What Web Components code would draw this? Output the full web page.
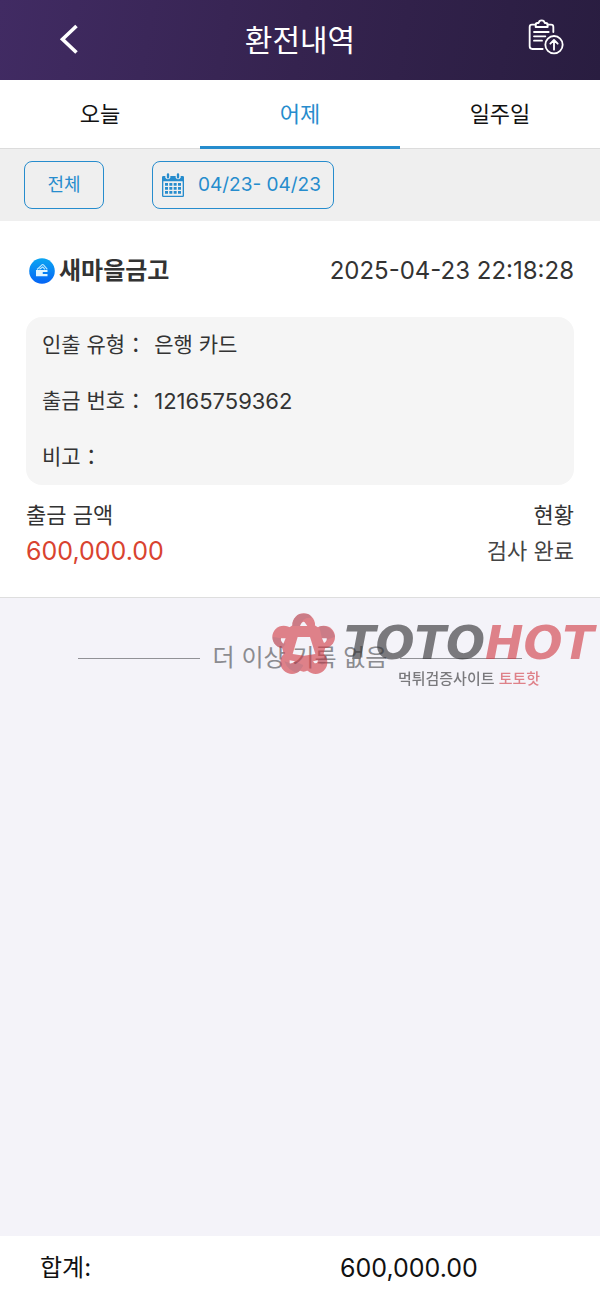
<!DOCTYPE html>
<html lang="ko">
<head>
<meta charset="utf-8">
<meta name="viewport" content="width=device-width, initial-scale=1">
<title>환전내역</title>
<style>
  body { margin: 0; font-family: Inter, "Noto Sans CJK KR", sans-serif; color: #333; --accent: #268ccd; }
</style>
</head>
<body>
<history-page></history-page>
<script>
const define = (name, html) => customElements.define(name, class extends HTMLElement {
  constructor() {
    super();
    const t = document.createElement('template');
    t.innerHTML = html;
    this.attachShadow({ mode: 'open' }).append(t.content.cloneNode(true));
  }
});

define('page-header', `
<style>
  :host { display: grid; grid-template-columns: 1fr auto 1fr; align-items: center; height: 80px; padding: 0 20px;
    background: linear-gradient(100deg, #412b63, #35234f 50%, #291d40); color: #fff; }
  h1 { margin: 0; font-size: 30px; font-weight: 400; line-height: 40px; }
  button { width: 60px; height: 60px; padding: 0; border: 0; background: none; color: inherit; }
  .back { margin-left: 20px; }
  .report { justify-self: end; }
  svg { display: block; width: 60px; height: 60px; fill: none; stroke: currentColor; }
</style>
<button class="back" aria-label="뒤로"><svg viewBox="0 0 60 60" stroke-width="3.6"><path d="M36.5 16 22.5 29.2 36.5 42.5"/></svg></button>
<h1><slot></slot></h1>
<button class="report" aria-label="내역 제출"><svg viewBox="0 0 180 180" stroke-width="5.5" stroke-linecap="round" stroke-linejoin="round">
  <path d="M47 44H36q-7 0-7 7v58q0 8 8 8h31M82 44h11q7 0 7 7v15"/>
  <path d="M47 51v-7q0-5 5-5h4q1-8 9-8t9 8h4q5 0 5 5v7z"/>
  <path d="M42 66h44M42 79h34M42 92h24"/>
  <circle cx="102" cy="104" r="26"/><path d="M102 119V90M91 101l11-11 11 11"/>
</svg></button>`);

define('day-tabs', `
<style>
  :host { display: flex; height: 69px; background: #fff; box-shadow: inset 0 -1px #dcdcdc; }
</style>
<slot></slot>`);

define('day-tab', `
<style>
  :host { display: flex; flex: 1; color: #111; }
  :host([selected]) { color: var(--accent); }
  button { flex: 1; padding: 2px 0 0; border: 0; border-bottom: 3px solid transparent; background: none; color: inherit;
    font: 400 22px/32px Inter, "Noto Sans CJK KR", sans-serif; }
  :host([selected]) button { border-color: var(--accent); }
</style>
<button><slot></slot></button>`);

define('filter-bar', `
<style>
  :host { display: flex; gap: 48px; padding: 12px 24px; background: #efefef; }
</style>
<slot></slot>`);

define('filter-button', `
<style>
  :host { display: block; }
  button { display: flex; align-items: center; justify-content: center; gap: 14px; height: 48px; min-width: 80px; padding: 0 10px;
    border: 1px solid var(--accent); border-radius: 8px; background: none; color: var(--accent);
    font: 400 18px/24px Inter, "Noto Sans CJK KR", sans-serif; }
  :host([dates]) button { padding: 0 12px 0 9px; font-size: 19px; }
  ::slotted(svg) { display: block; width: 22px; height: 24px; }
</style>
<button><slot name="icon"></slot><slot></slot></button>`);

define('withdrawal-record', `
<style>
  :host { display: block; padding: 4px 26px 28px; background: #fff; border-bottom: 1px solid #dedede; }
  header { display: flex; align-items: center; justify-content: space-between; height: 92px; }
  h2 { display: flex; align-items: center; gap: 4px; margin: 0 0 0 3px; font-size: 24px; line-height: 36px; font-weight: 700; }
  svg { display: block; width: 26px; height: 26px; }
  time { font-size: 24px; line-height: 36px; }
  footer { display: flex; justify-content: space-between; margin-top: 12px; }
</style>
<header>
  <h2><svg viewBox="0 0 26 26"><defs><linearGradient id="g" x2="0" y2="1"><stop stop-color="#0ba6f2"/><stop offset="1" stop-color="#0564f5"/></linearGradient></defs>
    <circle cx="13" cy="13" r="12.8" fill="url(#g)"/>
    <path d="M8 11.5 13 6.8q.8-.6 1.5.1l3.8 4.4M10.5 11.3l3.2-2.3 2.2 2.4" fill="none" stroke="#bdeaff" stroke-width="1.1"/>
    <path d="M7 12h11.5v2.1H14q-1 .9 0 1.8h4.5v2.3H7z" fill="#e1f5ff"/></svg><slot name="bank"></slot></h2>
  <time><slot name="time"></slot></time>
</header>
<slot></slot>
<footer><slot name="summary"></slot></footer>`);

define('detail-list', `
<style>
  :host { display: block; padding: 0 16px; border-radius: 16px; background: #f5f5f5; }
</style>
<slot></slot>`);

define('detail-row', `
<style>
  :host { display: flex; align-items: center; gap: 8px; height: 56px; font-size: 21px; line-height: 32px; }
  :host([number]) slot[name=value] { font-size: 22px; }
</style>
<span><slot></slot></span><span><slot name="value"></slot></span>`);

define('summary-item', `
<style>
  :host { display: block; font-size: 22px; line-height: 36px; }
  :host([end]) { text-align: right; }
  .value { color: #444; }
  :host([amount]) .value { color: #d9432f; font-size: 25px; }
</style>
<div><slot></slot></div><div class="value"><slot name="value"></slot></div>`);

define('list-end', `
<style>
  :host { display: flex; align-items: center; gap: 13px; padding: 42px 78px 0; color: #8b8b90; font-size: 24px; line-height: 36px; white-space: nowrap; }
  i { flex: 1; height: 1px; background: #919196; }
</style>
<i></i><span><slot></slot></span><i></i>`);

define('brand-mark', `
<style>
  :host { position: absolute; top: 10px; right: 6px; display: flex; opacity: .62; color: #303032; pointer-events: none; }
  svg { display: block; width: 80px; height: 75px; flex: none; }
  .words { display: flex; flex-direction: column; align-items: center; width: 250px; margin-left: -1px; white-space: nowrap; }
  .logo { margin-top: 10px; font: italic 700 46px/50px "DejaVu Sans", sans-serif; }
  .tag { font: 500 15px/20px "Noto Sans CJK KR", sans-serif; }
  b { font-weight: inherit; color: #d23c46; }
</style>
<svg viewBox="0 0 240 225" aria-hidden="true">
  <defs><mask id="m"><rect width="240" height="225" fill="#fff"/>
    <path d="M98 87H135L151 138 117 143 83 138Z M105 54Q113 37 119 43L127 54Z M48 91H62L55 107Q46 100 48 91Z M171 91H185Q187 99 177 105Z M74 157 90 160Q84 167 74 166Z M144 160 158 157Q160 167 149 166Z"/></mask>
    <clipPath id="c"><circle cx="116" cy="50" r="34"/><circle cx="56" cy="87" r="34"/><circle cx="176" cy="87" r="34"/><circle cx="81" cy="163" r="35"/><circle cx="152" cy="163" r="35"/></clipPath></defs>
  <g mask="url(#m)">
    <g fill="#d23c46"><circle cx="116" cy="50" r="34"/><circle cx="56" cy="87" r="34"/><circle cx="176" cy="87" r="34"/><circle cx="81" cy="163" r="35"/><circle cx="152" cy="163" r="35"/>
      <path stroke="#d23c46" stroke-width="34" stroke-linejoin="round" d="M60 87 116 50 172 87 152 160 116 174 80 160Z"/></g>
    <g fill="#892f40" opacity=".42" clip-path="url(#c)">
      <path d="M80 54Q84 10 132 17L140 30Q114 25 105 54Z"/>
      <path d="M20 86Q19 120 50 125L62 107Q43 98 48 91Z"/>
      <path d="M162 54Q200 50 210 86L185 96 171 91Z"/>
      <path d="M58 160Q69 190 100 195L116 172 90 160 84 167Z"/>
      <path d="M186 140Q192 159 171 172L158 157Z"/>
    </g>
  </g>
</svg>
<div class="words"><span class="logo">TOTO<b>HOT</b></span><span class="tag">먹튀검증사이트 <b>토토핫</b></span></div>`);

define('total-bar', `
<style>
  :host { display: grid; grid-template-columns: 1fr 1fr; align-items: center; height: 64px; background: #fff; color: #111; font-size: 24px; line-height: 36px; }
  span { padding-left: 40px; }
  .value { font-size: 25px; }
</style>
<span><slot></slot></span><span class="value"><slot name="value"></slot></span>`);

define('history-page', `
<style>
  :host { display: flex; flex-direction: column; min-height: 100vh; background: #f4f3f9; }
  main { flex: 1; }
  .end { position: relative; min-height: 100px; }
</style>
<page-header>환전내역</page-header>
<day-tabs><day-tab>오늘</day-tab><day-tab selected>어제</day-tab><day-tab>일주일</day-tab></day-tabs>
<filter-bar>
  <filter-button>전체</filter-button>
  <filter-button dates><svg slot="icon" viewBox="0 0 66 72" aria-hidden="true">
    <path fill="#268ccd" fill-rule="evenodd" d="M4 9H10V14Q18 24 25 14V9H41V14Q48 24 56 14V9H62Q66 9 66 13V68Q66 72 62 72H4Q0 72 0 68V13Q0 9 4 9ZM4 25V68H62V25Z"/>
    <path stroke="#268ccd" stroke-width="7" stroke-linecap="round" d="M18 4v9M48 4v9"/>
    <path stroke="#268ccd" stroke-width="8" stroke-dasharray="9 4" d="M9 34h48M9 46h48M9 58h48"/>
  </svg>04/23- 04/23</filter-button>
</filter-bar>
<main>
  <withdrawal-record>
    <span slot="bank">새마을금고</span><span slot="time">2025-04-23 22:18:28</span>
    <detail-list>
      <detail-row>인출 유형：<span slot="value">은행 카드</span></detail-row>
      <detail-row number>출금 번호：<span slot="value">12165759362</span></detail-row>
      <detail-row>비고：</detail-row>
    </detail-list>
    <summary-item slot="summary" amount>출금 금액<span slot="value">600,000.00</span></summary-item>
    <summary-item slot="summary" end>현황<span slot="value">검사 완료</span></summary-item>
  </withdrawal-record>
  <div class="end"><list-end>더 이상 기록 없음</list-end><brand-mark></brand-mark></div>
</main>
<total-bar>합계:<span slot="value">600,000.00</span></total-bar>`);
</script>
</body>
</html>
